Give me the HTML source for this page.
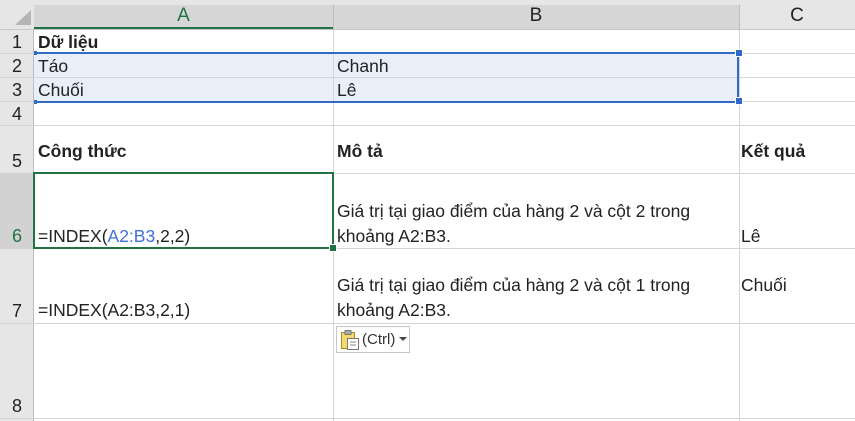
<!DOCTYPE html>
<html><head><meta charset="utf-8"><style>
*{margin:0;padding:0;box-sizing:border-box}
body{width:855px;height:421px;background:#fff;position:relative;overflow:hidden;font-family:"Liberation Sans","DejaVu Sans",sans-serif;font-size:17.5px;color:#222}
.a{position:absolute}
.h{background:#e6e6e6}
.hl{position:absolute;background:#d4d4d4}
.t{position:absolute;white-space:nowrap;line-height:20px}
.n{position:absolute;width:34px;text-align:center;font-size:18px;color:#222;line-height:20px}
b{font-weight:bold}
</style></head><body>
<div class="a h" style="left:0;top:0;width:855px;height:29px"></div>
<div class="a" style="left:34px;top:5px;width:705px;height:24px;background:#d6d6d6"></div>
<div class="a" style="left:34px;top:27px;width:299px;height:2px;background:#217346"></div>
<div class="a" style="left:0;top:29px;width:855px;height:1px;background:#c8c8c8"></div>
<svg class="a" style="left:14px;top:10px" width="18" height="16"><polygon points="17,0 17,15 1,15" fill="#b4b4b4"/></svg>
<div class="a" style="left:333px;top:5px;width:1px;height:24px;background:#bbb"></div>
<div class="a" style="left:739px;top:5px;width:1px;height:24px;background:#bbb"></div>
<div class="t" style="left:34px;top:6px;width:299px;text-align:center;font-size:19px;color:#217346">A</div>
<div class="t" style="left:333px;top:6px;width:406px;text-align:center;font-size:19px">B</div>
<div class="t" style="left:739px;top:6px;width:116px;text-align:center;font-size:19px">C</div>
<div class="a h" style="left:0;top:30px;width:34px;height:391px"></div>
<div class="a" style="left:0;top:174px;width:34px;height:74px;background:#d2d2d2"></div>
<div class="a" style="left:33px;top:30px;width:1px;height:391px;background:#bdbdbd"></div>
<div class="a" style="left:34px;top:54px;width:705px;height:47px;background:#e8eff9"></div>
<div class="hl" style="left:0;top:53px;width:855px;height:1px"></div>
<div class="hl" style="left:0;top:77px;width:855px;height:1px"></div>
<div class="hl" style="left:0;top:101px;width:855px;height:1px"></div>
<div class="hl" style="left:0;top:125px;width:855px;height:1px"></div>
<div class="hl" style="left:0;top:173px;width:855px;height:1px"></div>
<div class="hl" style="left:0;top:248px;width:855px;height:1px"></div>
<div class="hl" style="left:0;top:323px;width:855px;height:1px"></div>
<div class="hl" style="left:0;top:418px;width:855px;height:1px"></div>
<div class="hl" style="left:333px;top:30px;width:1px;height:391px"></div>
<div class="hl" style="left:739px;top:30px;width:1px;height:391px"></div>
<div class="a" style="left:35px;top:52px;width:704px;height:51px;border:2px solid #3169c6;border-left:none"></div>
<div class="a" style="left:34px;top:51px;width:3px;height:4px;background:#3169c6"></div>
<div class="a" style="left:34px;top:100px;width:3px;height:4px;background:#3169c6"></div>
<div class="a" style="left:736px;top:50px;width:6px;height:6px;background:#3169c6;outline:1px solid #fff"></div>
<div class="a" style="left:736px;top:98px;width:6px;height:6px;background:#3169c6;outline:1px solid #fff"></div>
<div class="a" style="left:33px;top:172px;width:301px;height:77px;border:2px solid #217346"></div>
<div class="a" style="left:330px;top:245px;width:6px;height:6px;background:#217346;outline:1px solid #fff"></div>
<div class="n" style="top:32px">1</div>
<div class="n" style="top:56px">2</div>
<div class="n" style="top:80px">3</div>
<div class="n" style="top:104px">4</div>
<div class="n" style="top:151px">5</div>
<div class="n" style="top:226px;color:#217346">6</div>
<div class="n" style="top:301px">7</div>
<div class="n" style="top:396px">8</div>
<div class="t" style="left:38px;top:32px"><b>Dữ liệu</b></div>
<div class="t" style="left:38px;top:56px">Táo</div>
<div class="t" style="left:337px;top:56px">Chanh</div>
<div class="t" style="left:38px;top:80px">Chuối</div>
<div class="t" style="left:337px;top:80px">Lê</div>
<div class="t" style="left:38px;top:141px"><b>Công thức</b></div>
<div class="t" style="left:337px;top:141px"><b>Mô tả</b></div>
<div class="t" style="left:741px;top:141px"><b>Kết quả</b></div>
<div class="t" style="left:38px;top:226px">=INDEX(<span style="color:#3f6fd8">A2:B3</span>,2,2)</div>
<div class="t" style="left:337px;top:201px">Giá trị tại giao điểm của hàng 2 và cột 2 trong</div>
<div class="t" style="left:337px;top:226px">khoảng A2:B3.</div>
<div class="t" style="left:741px;top:226px">Lê</div>
<div class="t" style="left:38px;top:300px">=INDEX(A2:B3,2,1)</div>
<div class="t" style="left:337px;top:275px">Giá trị tại giao điểm của hàng 2 và cột 1 trong</div>
<div class="t" style="left:337px;top:300px">khoảng A2:B3.</div>
<div class="t" style="left:741px;top:275px">Chuối</div>
<div class="a" style="left:336px;top:326px;width:74px;height:27px;border:1px solid #c6c6c6;background:#fff"></div>
<svg class="a" style="left:340px;top:329px" width="20" height="22" viewBox="0 0 20 22">
<rect x="1.5" y="3.5" width="13" height="16" fill="#f5d96b" stroke="#b08a2a"/>
<rect x="5" y="1.5" width="6" height="4" fill="#aaa" stroke="#777"/>
<rect x="7.5" y="9.5" width="11" height="11" fill="#fff" stroke="#777"/>
<line x1="10" y1="13" x2="16" y2="13" stroke="#888"/><line x1="10" y1="16" x2="16" y2="16" stroke="#888"/>
</svg>
<div class="t" style="left:362px;top:330px;font-size:15px;color:#333">(Ctrl)</div>
<svg class="a" style="left:399px;top:337px" width="8" height="5"><polygon points="0,0 8,0 4,4" fill="#444"/></svg>
</body></html>
